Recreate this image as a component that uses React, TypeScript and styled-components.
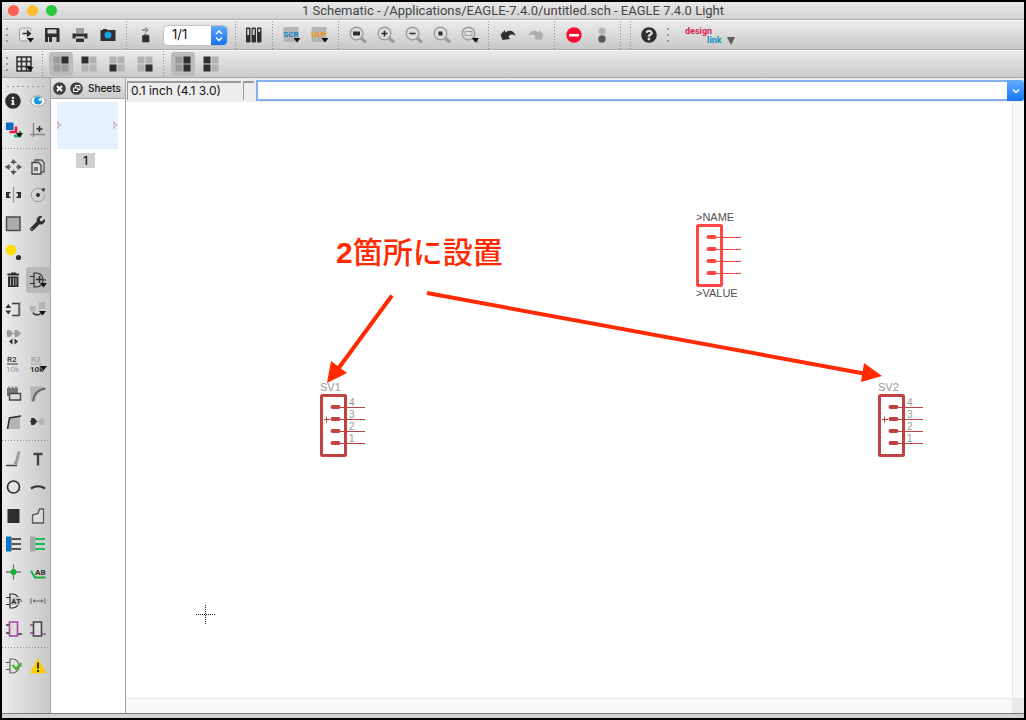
import React from 'react';
import styled, { createGlobalStyle, css } from 'styled-components';
import { FaWrench, FaQuestionCircle, FaInfoCircle } from 'react-icons/fa';

const INK = '#2f2f2f';
const MID = '#9c9c9c';
const SOFT = '#b4b4b4';

const GlobalStyle = createGlobalStyle`
  * { box-sizing: border-box; }
  body {
    margin: 0;
    background: #000;
    color: #111;
    font-family: Inter, "Noto Sans CJK JP", sans-serif;
  }
  button, input, select { font: inherit; color: inherit; margin: 0; }
`;

const Window = styled.div`
  display: flex;
  flex-direction: column;
  min-height: 100vh;
  border: 2px solid #000;
  background: #ececec;
`;

const TitleBar = styled.header`
  height: 18px;
  flex: none;
  display: grid;
  grid-template-columns: 64px 1fr 64px;
  align-items: center;
  border-bottom: 1px solid #aeaeae;
  background: linear-gradient(#e9e9e9, #d2d2d2);
`;

const Lights = styled.div`
  display: flex;
  gap: 8px;
  padding-left: 6px;
`;

const Light = styled.button<{ $color: string }>`
  width: 11px;
  height: 11px;
  padding: 0;
  border: 0;
  border-radius: 50%;
  background: ${(p) => p.$color};
`;

const Title = styled.h1`
  margin: 0;
  text-align: center;
  white-space: nowrap;
  font: 400 13px/16px Roboto, sans-serif;
  color: #444;
`;

const Toolbar = styled.div<{ $height: number }>`
  display: flex;
  align-items: center;
  flex: none;
  height: ${(p) => p.$height}px;
  border-top: 1px solid #fafafa;
  border-bottom: 1px solid #a9a9a9;
  background: linear-gradient(#ebebeb, #c9c9c9);
`;

const Grip = styled.div`
  width: 10px;
  height: 18px;
  flex: none;
  background: linear-gradient(#9a9a9a 0 2px, transparent 2px) 4px 2px / 2px 6px repeat-y;
`;

const Separator = styled.div<{ $width?: number }>`
  width: ${(p) => p.$width ?? 10}px;
  align-self: stretch;
  flex: none;
  padding-left: 4px;
  &::before {
    content: "";
    display: block;
    width: 1px;
    height: 100%;
    background: repeating-linear-gradient(#8c8c8c 0 1px, transparent 1px 3px);
  }
`;

const ToolButton = styled.button<{ $width?: number; $active?: boolean }>`
  display: flex;
  align-items: center;
  justify-content: center;
  flex: none;
  width: ${(p) => p.$width ?? 28}px;
  height: 26px;
  padding: 0;
  border: 0;
  border-radius: 3px;
  background: none;
  ${(p) =>
    p.$active &&
    css`
      background: #bcbcbc;
      background-clip: content-box;
      padding: 1px 2px;
      border-radius: 5px;
    `}
`;

const Icon = styled.svg`
  display: block;
  width: 24px;
  height: 24px;
  flex: none;
`;

const SheetPicker = styled.label`
  display: grid;
  width: 63px;
  height: 19px;
  margin: 0 4px;
  border-radius: 4px;
  overflow: hidden;
  background: #fff;
  box-shadow: 0 0 1px 1px #c0c0c0;
  & > * { grid-area: 1 / 1; }
`;

const SheetSelect = styled.select`
  appearance: none;
  width: 100%;
  border: 0;
  padding: 0 8px 2px;
  background: none;
  font-size: 13px;
  line-height: 17px;
`;

const Stepper = styled.svg`
  justify-self: end;
  width: 16px;
  height: 19px;
  background: linear-gradient(#62a8f8, #1771f2);
  pointer-events: none;
`;

const DesignLink = styled.button`
  padding: 0;
  margin-left: 12px;
  border: 0;
  background: none;
  & > svg { display: block; width: 54px; height: 26px; }
`;

const Main = styled.main`
  display: flex;
  flex: 1;
`;

const Palette = styled.nav`
  width: 49px;
  flex: none;
  border-right: 1px solid #a6a6a6;
  background: linear-gradient(90deg, #ececec, #c8c8c8);
`;

const PaletteGrip = styled.div`
  height: 9px;
  margin: 0 5px;
  background: linear-gradient(90deg, #9a9a9a 0 2px, transparent 2px) 0 8px / 5px 1px repeat-x;
`;

const PaletteGroup = styled.div<{ $rows: number; $height: number }>`
  display: grid;
  grid-template-columns: 24px 24px;
  grid-template-rows: repeat(${(p) => p.$rows}, 1fr);
  height: ${(p) => p.$height}px;
`;

const PaletteButton = styled.button<{ $active?: boolean }>`
  display: flex;
  align-items: center;
  justify-content: center;
  align-self: center;
  height: 26px;
  padding: 0;
  border: 0;
  border-radius: 4px;
  background: ${(p) => (p.$active ? '#b8b8b8' : 'none')};
`;

const PaletteRule = styled.hr`
  height: 1px;
  margin: 4px 0;
  border: 0;
  background: repeating-linear-gradient(90deg, #8f8f8f 0 1px, transparent 1px 3px);
`;

const SheetsPanel = styled.aside`
  width: 75px;
  flex: none;
  border-right: 1px solid #9f9f9f;
  background: #fff;
`;

const PanelHeader = styled.header`
  display: flex;
  align-items: center;
  gap: 4px;
  height: 21px;
  padding-left: 2px;
  border-bottom: 1px solid #a8a8a8;
  background: linear-gradient(#e6e6e6, #cbcbcb);
`;

const PanelButton = styled.button`
  padding: 0;
  border: 0;
  background: none;
  & > svg { display: block; width: 13px; height: 13px; }
`;

const PanelTitle = styled.h2`
  margin: 0 0 0 1px;
  font-size: 10px;
  line-height: 14px;
  font-weight: 500;
`;

const SheetItem = styled.button`
  display: flex;
  flex-direction: column;
  align-items: center;
  gap: 4px;
  width: 100%;
  padding: 3px 7px 0 6px;
  border: 0;
  background: none;
`;

const Thumb = styled.span`
  display: flex;
  align-items: center;
  justify-content: space-between;
  width: 100%;
  height: 47px;
  background: #e4f1fe;
  & > svg { width: 5px; height: 11px; }
`;

const SheetNumber = styled.span`
  width: 19px;
  margin-right: 4px;
  background: #d0d0d0;
  font-size: 12px;
  line-height: 15px;
  font-weight: 500;
`;

const Editor = styled.section`
  display: flex;
  flex-direction: column;
  flex: 1;
  min-width: 0;
`;

const CommandRow = styled.div`
  display: flex;
  align-items: center;
  height: 24px;
  gap: 2px;
  padding-left: 1px;
  background: #ececec;
`;

const Readout = styled.output<{ $width: number }>`
  width: ${(p) => p.$width}px;
  height: 19px;
  padding-left: 3px;
  flex: none;
  border: solid #9b9b9b;
  border-width: 2px 0 0 1px;
  background: #ededed;
  font-size: 12px;
  line-height: 16px;
  white-space: nowrap;
`;

const CommandBox = styled.div`
  display: flex;
  flex: 1;
  height: 21px;
`;

const CommandInput = styled.input`
  flex: 1;
  min-width: 0;
  border: 2px solid #84b0ec;
  border-right: 0;
  padding: 0 4px;
  background: #fff;
  font-size: 12px;
  outline: 0;
`;

const CommandDrop = styled.button`
  width: 17px;
  padding: 0;
  border: 0;
  border-radius: 0 3px 3px 0;
  background: linear-gradient(#66abfb, #1476f6);
  & > svg { display: block; width: 17px; height: 21px; }
`;

const Sheet = styled.div`
  display: grid;
  flex: 1;
  grid-template: 1fr 15px / 1fr 12px;
`;

const Drawing = styled.svg`
  width: 100%;
  height: 100%;
  background: #fff;
`;

const ScrollTrack = styled.div<{ $edge: 'left' | 'top' }>`
  background: #f8f8f8;
  border-${(p) => p.$edge}: 1px solid #e8e8e8;
`;

const ScrollCorner = styled.div`
  background: #e8e8e8;
`;

const StatusStrip = styled.footer`
  height: 5px;
  flex: none;
  border-top: 1px solid #7c7c7c;
  background: #d4d4d4;
`;

const Drop = ({ x = 15, y = 15 }: { x?: number; y?: number }) => (
  <path d={`M${x} ${y}h7l-3.5 4.5z`} fill="#111" />
);

const Lens = ({ children }: { children?: React.ReactNode }) => (
  <>
    <path d="M14.5 14.5l4.5 4" stroke={MID} strokeWidth="3.2" strokeLinecap="round" />
    <circle cx="10.500" cy="10.500" r="6.300" fill="#dedede" stroke={MID} strokeWidth="1.4" />
    {children}
  </>
);

const Quad = ({ dark, light = '#b2b2b2' }: { dark: number[]; light?: string }) => (
  <>
    {[0, 1, 2, 3].map((i) => (
      <rect
        key={i}
        x={4.5 + (i % 2) * 8}
        y={4.5 + (i > 1 ? 8 : 0)}
        width="7"
        height="7"
        fill={dark.includes(i) ? INK : light}
      />
    ))}
  </>
);

const Gate = ({ color = INK }: { color?: string }) => (
  <path
    d="M8 5h2.500c4 0 6.500 3.500 6.500 7s-2.500 7-6.500 7H8zM4 8.500h4M4 15.500h4M17 12h3"
    fill="none"
    stroke={color}
    strokeWidth="1.2"
  />
);

const Plug = ({ x, color, flip }: { x: number; color: string; flip?: boolean }) => (
  <path
    d="M0 0h1.500v-3h1.500c2 0 3 1.500 3 3s-1 3-3 3h-1.500v-3M6 0h1.500"
    transform={`translate(${x} 0)${flip ? ' scale(-1 1)' : ''}`}
    fill={color}
    stroke={color}
  />
);

type Tool = { label: string; art: React.ReactNode; width?: number; active?: boolean };

const fileTools: Tool[] = [
  {
    label: 'Open',
    width: 26,
    art: (
      <>
        <path d="M18 8V7q0-2-2-2H8.500q-2 0-2 2v9q0 2 2 2H14" fill="#e6e6e6" stroke={MID} />
        <path d="M9.500 10.500h6M14.500 8l3 2.500-3 2.500z" fill={INK} stroke={INK} strokeWidth="1.3" />
        <Drop x={14} y={15} />
      </>
    ),
  },
  {
    label: 'Save',
    art: (
      <>
        <path d="M5 5h13.500l1 1v13H5z" fill={INK} />
        <path d="M7.500 6.500h9v4h-9z" fill="#d8d8d8" />
        <path d="M8 14h8.500v5H8z" fill="#d0d0d0" />
        <path d="M9 14h3v5H9z" fill={INK} />
      </>
    ),
  },
  {
    label: 'Print',
    art: (
      <>
        <path d="M8 5h8v5H8z" fill={MID} />
        <path d="M4.500 10.500h15v5h-3v-2h-9v2h-3z" fill={INK} />
        <path d="M8 15.500h8v3.500H8z" fill={INK} />
      </>
    ),
  },
  {
    label: 'Export image',
    art: (
      <>
        <path d="M5 7h2V6h4v1h8.500v11h-15V7z" fill={INK} />
        <circle cx="12" cy="12" r="3.500" fill="#12a3e6" />
      </>
    ),
  },
];

const switchTool: Tool = {
  label: 'Switch to board',
  art: (
    <>
      <path d="M8 7h3V4.500l4 3.500-4 3.500V9H8z" fill={MID} transform="translate(0 -1)" />
      <path d="M8.500 12.500h6.500v6.500H8.500zM10 11.500h3.500" fill={INK} stroke={INK} strokeWidth=".6" />
    </>
  ),
};

const libraryTool: Tool = {
  label: 'Use library',
  art: [4, 9.5, 15].map((x, i) => (
    <g key={x}>
      <rect x={x} y="4.500" width="4.500" height="15" rx="1" fill={INK} />
      <rect x={x + 1.2} y="6" width="2" height={i === 2 ? 3 : 6} fill="#d2d2d2" />
    </g>
  )),
};

const Tag = ({ text, color }: { text: string; color: string }) => (
  <>
    <rect x="3.500" y="4" width="15" height="15" fill={SOFT} />
    <text x="11" y="14" textAnchor="middle" fontFamily="Roboto, sans-serif" fontWeight="700" fontSize="8" fill={color}>
      {text}
    </text>
    <Drop x={13.5} y={15} />
  </>
);

const scriptTools: Tool[] = [
  { label: 'Run script', art: <Tag text="SCR" color="#0b86c8" /> },
  { label: 'Run ULP', art: <Tag text="ULP" color="#ff9200" /> },
];

const zoomTools: Tool[] = [
  { label: 'Zoom to fit', art: <Lens><path d="M7 8.500h7v4H7z" fill={INK} /></Lens> },
  { label: 'Zoom in', art: <Lens><path d="M7.500 10.500h6M10.500 7.500v6" stroke={INK} strokeWidth="1.6" /></Lens> },
  { label: 'Zoom out', art: <Lens><path d="M7.500 10.500h6" stroke={INK} strokeWidth="1.6" /></Lens> },
  { label: 'Redraw', art: <Lens><path d="M8.500 8.500h4v4h-4z" fill={INK} /></Lens> },
  {
    label: 'Zoom select',
    art: (
      <>
        <Lens><path d="M7 8.500h7v4H7z" fill="none" stroke={MID} /></Lens>
        <Drop x={14} y={15} />
      </>
    ),
  },
];

const undoPath = 'M4.500 11.500l4.500-4.500v2.500c5-3.500 9.500-1.500 10.500 3.500-2.500-2-5-2-7 .500l1.500 2.500-7.500 1z';
const historyTools: Tool[] = [
  { label: 'Undo', art: <path d={undoPath} fill={INK} /> },
  { label: 'Redo', art: <path d={undoPath} fill="#adadad" transform="matrix(-1 0 0 1 24 0)" /> },
];

const runTools: Tool[] = [
  {
    label: 'Stop',
    art: (
      <>
        <circle cx="12" cy="12" r="7.700" fill="#fb0d33" />
        <path d="M7 11h10v2.500H7z" fill="#fff" />
      </>
    ),
  },
  {
    label: 'Go',
    art: (
      <>
        <circle cx="12" cy="8" r="3.500" fill={SOFT} />
        <circle cx="12" cy="16" r="3.700" fill="#585858" />
      </>
    ),
  },
];

const placementTools: Tool[] = [
  { label: 'Top right', active: true, art: <Quad dark={[1]} light="#9c9c9c" /> },
  { label: 'Top left', art: <Quad dark={[0]} /> },
  { label: 'Bottom left', art: <Quad dark={[2]} /> },
  { label: 'Bottom right', art: <Quad dark={[3]} /> },
];

const sideTools: Tool[] = [
  { label: 'Right column', active: true, art: <Quad dark={[1, 3]} light="#9c9c9c" /> },
  { label: 'Left column', art: <Quad dark={[0, 2]} /> },
];

const gridTool: Tool = {
  label: 'Grid',
  width: 26,
  art: (
    <>
      <path
        d="M4 5h14v14H4zM8.500 5v14M13.500 5v14M4 9.500h14M4 14.500h14"
        fill="#dcdcdc"
        stroke={INK}
        strokeWidth="1.500"
      />
      <Drop x={13.5} y={15} />
    </>
  ),
};

const Value = ({ top, bottom, drop }: { top: string; bottom: string; drop?: boolean }) => (
  <g fontFamily="Roboto, sans-serif" fontSize="8">
    <text x="5" y="9" fill={top} fontWeight="500">R2</text>
    <path d="M5 11h11" stroke={top} />
    <text x="4" y="19" fill={bottom} fontWeight={drop ? 700 : 400}>10k</text>
    {drop && <Drop x={14} y={13} />}
  </g>
);

const Bus = ({ block, wire }: { block: string; wire: string }) => (
  <>
    <path d="M4 4.500h5.500v15H4z" fill={block} />
    <path d="M9.500 7h9.500M9.500 12h9.500M9.500 17h9.500" stroke={wire} strokeWidth="2" />
  </>
);

const Module = ({ body, pins }: { body: string; pins: string }) => (
  <>
    <path d="M4 8h4M4 16h4M16 17h4" stroke={pins} strokeWidth="1.600" />
    <path d="M7.500 5h8v14h-8z" fill="#dedede" stroke={body} strokeWidth="1.600" />
  </>
);

const viewTools: Tool[] = [
  { label: 'Info', art: <FaInfoCircle x="3" y="4" size={16} color={INK} /> },
  {
    label: 'Show',
    art: (
      <>
        <ellipse cx="12" cy="12" rx="7.200" ry="5.200" fill="#fff" stroke={MID} />
        <circle cx="12" cy="11.500" r="4" fill="#0f9be2" />
        <circle cx="14" cy="10.500" r="1.500" fill="#fff" />
      </>
    ),
  },
  {
    label: 'Display layers',
    art: (
      <>
        <path d="M4 4.500h7.500V12H4z" fill="#0a6cc0" />
        <path d="M7.500 14h6.500V8.500" fill="none" stroke="#ef1745" strokeWidth="2.600" />
        <path d="M12 18h6v-5" fill="none" stroke="#10a860" strokeWidth="2.400" />
        <Drop x={14} y={15} />
      </>
    ),
  },
  {
    label: 'Mark',
    art: (
      <>
        <path d="M7.500 5v14M4 16.500h15" stroke="#858585" strokeWidth="1.300" />
        <path d="M10.500 11h6M13.500 8v6" stroke={INK} strokeWidth="1.600" />
      </>
    ),
  },
];

const editTools: Tool[] = [
  {
    label: 'Move',
    art: (
      <path
        d="M11.500 5l2 2.500h-4zM11.500 19l2-2.500h-4zM4 12l3-2v4zM19 12l-3-2v4zM7 12h2M14 12h2M11.500 7v2.500M11.500 14.500V17"
        fill="#555"
        stroke="#555"
        strokeWidth="1.200"
      />
    ),
  },
  {
    label: 'Copy',
    art: (
      <>
        <path d="M9 7V5h6.500l2.500 2.500V17h-3" fill="none" stroke="#555" strokeWidth="1.300" />
        <path d="M6 7.500h6.500L15 10v9H6z" fill="#ddd" stroke="#444" strokeWidth="1.300" />
        <path d="M8 12h4v4H8z" fill="#777" />
      </>
    ),
  },
  {
    label: 'Mirror',
    art: (
      <>
        <path d="M11.500 4v16" stroke={MID} strokeWidth="1.300" />
        <path d="M4 9h4.500v1.500H7v3h1.500V15H4zM19 9h-4.500v1.500H16v3h-1.500V15H19z" fill={INK} />
      </>
    ),
  },
  {
    label: 'Rotate',
    art: (
      <>
        <circle cx="12" cy="12" r="6.800" fill="none" stroke={MID} strokeDasharray="36 7" />
        <circle cx="12" cy="12" r="2" fill={INK} />
        <path d="M15 6l4-1-1 4z" fill={INK} />
      </>
    ),
  },
  { label: 'Group', art: <path d="M4.500 5h13.500v13.500H4.500z" fill="#ababab" stroke="#4b4b4b" strokeWidth="1.500" /> },
  { label: 'Change', art: <FaWrench x="4" y="4" size={15} color={INK} /> },
  {
    label: 'Paste',
    art: (
      <>
        <circle cx="9" cy="10" r="5.300" fill="#ffdd00" />
        <circle cx="16.500" cy="17.500" r="2.600" fill={INK} />
      </>
    ),
  },
  { label: '', art: null },
  {
    label: 'Delete',
    art: (
      <>
        <path d="M5.500 6.500h11.500M9 5.500h5" stroke={INK} strokeWidth="2" />
        <path d="M6 8.500h10.500V19H6z" fill={INK} />
        <path d="M8.500 10v7.500M11.500 10v7.500M14 10v7.500" stroke="#aaa" />
      </>
    ),
  },
  {
    label: 'Add part',
    active: true,
    art: (
      <>
        <Gate />
        <path d="M10 11.500h7M13.500 8v7" stroke={INK} strokeWidth="1.600" />
        <Drop x={14} y={15} />
      </>
    ),
  },
  {
    label: 'Pin swap',
    art: (
      <>
        <path d="M3.500 11l2.800-4 2.800 4zM3.500 13.500h5.600l-2.800 4z" fill={INK} />
        <path d="M17 5h2v14h-2z" fill={SOFT} />
        <path d="M10 6.500h7v12h-7" fill="none" stroke="#444" strokeWidth="1.300" />
      </>
    ),
  },
  {
    label: 'Replace',
    art: (
      <>
        <path d="M4 9h5.500v5.500H4zM13 5h6v7h-6z" fill={SOFT} />
        <path d="M7 15.500q1 3 6 2l2-1" fill="none" stroke={INK} strokeWidth="1.300" />
        <Drop x={13} y={14} />
      </>
    ),
  },
  {
    label: 'Gate swap',
    art: (
      <>
        <g transform="translate(0 8.500)">
          <Plug x={4} color={MID} />
          <Plug x={11.5} color={MID} />
        </g>
        <path d="M10.500 13.500v6L7 16.500zM12.500 13.500v6l3.500-3z" fill={INK} />
      </>
    ),
  },
  { label: '', art: null },
  { label: 'Name', art: <Value top={INK} bottom={MID} /> },
  { label: 'Value', art: <Value top={MID} bottom={INK} drop /> },
  {
    label: 'Smash',
    art: (
      <>
        <path d="M5 6h11v8H5z" fill="#777" />
        <path d="M7 4.500v3M10.500 4.500v3M14 4.500v3" stroke="#777" strokeWidth="1.600" />
        <path d="M7.500 11.500h11v6.500h-11z" fill="#ddd" stroke="#444" strokeWidth="1.400" />
      </>
    ),
  },
  {
    label: 'Miter',
    art: (
      <>
        <path d="M4.500 4.500h14v4q-8 1-9 10.500h-5z" fill={SOFT} />
        <path d="M7 19.500q1-11.500 12.500-13" fill="none" stroke="#555" strokeWidth="1.500" />
      </>
    ),
  },
  {
    label: 'Split',
    art: (
      <>
        <path d="M8 8l10-1.500V19H6z" fill={SOFT} />
        <path d="M5.500 19l2-11L19 6" fill="none" stroke={INK} strokeWidth="1.500" />
      </>
    ),
  },
  {
    label: 'Invoke',
    art: (
      <g transform="translate(0 11.500)">
        <Plug x={4} color={INK} />
        <Plug x={19} color={SOFT} flip />
      </g>
    ),
  },
];

const drawTools: Tool[] = [
  {
    label: 'Wire',
    art: (
      <>
        <path d="M4 18.500h11" stroke="#444" strokeWidth="1.500" />
        <path d="M17 4.500l-2.500 10-1.500 3" stroke={MID} strokeWidth="3" fill="none" />
      </>
    ),
  },
  { label: 'Text', art: <path d="M7.500 7h9M12 7v11.500" stroke="#444" strokeWidth="2.400" fill="none" /> },
  { label: 'Circle', art: <circle cx="11.500" cy="12" r="6" fill="none" stroke={INK} strokeWidth="1.700" /> },
  { label: 'Arc', art: <path d="M5 13.500q7-4.500 14 0" fill="none" stroke={INK} strokeWidth="2.200" /> },
  { label: 'Rectangle', art: <path d="M5.500 5h12v14h-12z" fill={INK} /> },
  { label: 'Polygon', art: <path d="M6.500 19v-8L12 9.500l1.500-4.500h4v14z" fill="#ddd" stroke="#555" strokeWidth="1.300" /> },
  { label: 'Bus', art: <Bus block="#0b74c6" wire="#555" /> },
  { label: 'Net', art: <Bus block="#a6a6a6" wire="#15bd55" /> },
  {
    label: 'Junction',
    art: (
      <>
        <path d="M11.500 4.500v15M4 12h15" stroke="#777" strokeWidth="1.300" />
        <circle cx="11.500" cy="12" r="3" fill="#10b030" />
      </>
    ),
  },
  {
    label: 'Label',
    art: (
      <>
        <path d="M5 11l4 6.500h10.500" fill="none" stroke="#15ae45" strokeWidth="2" />
        <text x="9" y="15" fontFamily="Roboto, sans-serif" fontWeight="700" fontSize="8" fill={INK}>AB</text>
      </>
    ),
  },
  {
    label: 'Attribute',
    art: (
      <>
        <Gate />
        <rect x="9.500" y="8" width="9" height="8" fill="#c8c8c8" />
        <text x="9" y="15" fontFamily="Roboto, sans-serif" fontWeight="700" fontSize="8" fill={INK}>AT</text>
      </>
    ),
  },
  {
    label: 'Dimension',
    art: <path d="M5 9v6M19 9v6M7 12h10M9 10.500L7 12l2 1.500M15 10.500l2 1.500-2 1.500" fill="none" stroke="#666" />,
  },
  { label: 'Module', art: <Module body="#a044a0" pins={INK} /> },
  { label: 'Port', art: <Module body="#444" pins="#a044a0" /> },
];

const checkTools: Tool[] = [
  {
    label: 'Electrical rule check',
    art: (
      <>
        <Gate color="#666" />
        <path d="M10.500 11l3.500 4 5.500-6" fill="none" stroke="#3fb71c" strokeWidth="2" />
      </>
    ),
  },
  {
    label: 'Errors',
    art: (
      <>
        <path d="M12 5.500L19 18.500H5z" fill="#fc0" stroke="#fc0" strokeWidth="1.500" strokeLinejoin="round" />
        <path d="M12 8.500v6M12 16v2" stroke={INK} strokeWidth="2" />
      </>
    ),
  },
];

const Tools = ({ items }: { items: Tool[] }) => (
  <>
    {items.map((t) => (
      <ToolButton key={t.label} type="button" aria-label={t.label} $width={t.width} $active={t.active}>
        <Icon viewBox="0 0 24 24" fill="none">{t.art}</Icon>
      </ToolButton>
    ))}
  </>
);

const PaletteTools = ({ items, height }: { items: Tool[]; height: number }) => (
  <PaletteGroup $rows={items.length / 2} $height={height}>
    {items.map((t, i) =>
      t.art ? (
        <PaletteButton key={i} type="button" aria-label={t.label} $active={t.active}>
          <Icon viewBox="0 0 24 24" fill="none">{t.art}</Icon>
        </PaletteButton>
      ) : (
        <span key={i} />
      ),
    )}
  </PaletteGroup>
);

const vectorFont = '"Liberation Sans", Arial, sans-serif';

type PartProps = { x: number; y: number; name: string; value?: string; color: string; ink: string; placed?: boolean };

const Part = ({ x, y, name, value, color, ink, placed }: PartProps) => (
  <g transform={`translate(${x} ${y})`} fontFamily={vectorFont} fontSize="11">
    <g fill={ink}>
      <text x="0" y="-3">{name}</text>
      {value && <text x="0" y="73">{value}</text>}
      {placed &&
        [4, 3, 2, 1].map((pin, i) => (
          <text key={pin} x="29" y={12 + i * 12} fontSize="10">{pin}</text>
        ))}
    </g>
    <g fill="none" stroke={color}>
      <rect x="1.500" y="1.500" width="24" height="60" rx="1" strokeWidth="3" />
      {[13, 25, 37, 49].map((row) => (
        <g key={row} transform={`translate(0 ${row})`}>
          <path d="M20 .5h25" />
          <path d="M12.500 0h6" strokeWidth="4" strokeLinecap="round" />
        </g>
      ))}
      {placed && <path d="M4 25.500h6M6.500 22.500v6" />}
    </g>
  </g>
);

const MiniPart = () => (
  <svg viewBox="0 0 5 11">
    <path d="M1 1v8M1 3l3 2-3 2" fill="none" stroke="#d3a3b8" />
  </svg>
);

export default function App() {
  return (
    <>
      <GlobalStyle />
      <Window>
        <TitleBar>
          <Lights>
            <Light type="button" aria-label="Close" $color="#ff5f57" />
            <Light type="button" aria-label="Minimize" $color="#ffbd2e" />
            <Light type="button" aria-label="Zoom" $color="#28c840" />
          </Lights>
          <Title>1 Schematic - /Applications/EAGLE-7.4.0/untitled.sch - EAGLE 7.4.0 Light</Title>
        </TitleBar>

        <Toolbar $height={30}>
          <Grip />
          <Tools items={fileTools} />
          <Separator />
          <Tools items={[switchTool]} />
          <SheetPicker>
            <SheetSelect aria-label="Sheet" defaultValue="1/1">
              <option>1/1</option>
            </SheetSelect>
            <Stepper viewBox="0 0 16 19">
              <path d="M5 8l3-3 3 3M5 11.500l3 3 3-3" fill="none" stroke="#fff" strokeWidth="1.400" />
            </Stepper>
          </SheetPicker>
          <Separator $width={9} />
          <Tools items={[libraryTool]} />
          <Separator />
          <Tools items={scriptTools} />
          <Separator />
          <Tools items={zoomTools} />
          <Separator />
          <Tools items={historyTools} />
          <Separator />
          <Tools items={runTools} />
          <Separator />
          <Separator $width={9} />
          <Tools items={[{ label: 'Help', art: <FaQuestionCircle x="4" y="4" size={16} color={INK} /> }]} />
          <Grip />
          <DesignLink type="button" aria-label="Design link">
            <svg viewBox="0 0 54 26" fontFamily="Roboto, sans-serif" fontWeight="700" fontSize="9">
              <text x="0" y="12" fill="#d9274f">design</text>
              <text x="22" y="21" fill="#1591bd">link</text>
              <path d="M42 15h8l-4 8z" fill="#5c5c5c" />
            </svg>
          </DesignLink>
        </Toolbar>

        <Toolbar $height={28}>
          <Grip />
          <Tools items={[gridTool]} />
          <Separator $width={9} />
          <Tools items={placementTools} />
          <Separator />
          <Tools items={sideTools} />
        </Toolbar>

        <Main>
          <Palette aria-label="Tools">
            <PaletteGrip />
            <PaletteTools items={viewTools} height={57} />
            <PaletteRule />
            <PaletteTools items={editTools} height={283} />
            <PaletteRule />
            <PaletteTools items={drawTools} height={198} />
            <PaletteRule />
            <PaletteTools items={checkTools} height={28} />
          </Palette>

          <SheetsPanel>
            <PanelHeader>
              <PanelButton type="button" aria-label="Close panel">
                <svg viewBox="0 0 13 13">
                  <circle cx="6.500" cy="6.500" r="6.300" fill="#3f3f3f" />
                  <path d="M4 4l5 5M9 4L4 9" stroke="#fff" strokeWidth="2" />
                </svg>
              </PanelButton>
              <PanelButton type="button" aria-label="Float panel">
                <svg viewBox="0 0 13 13" fill="none">
                  <circle cx="6.500" cy="6.500" r="6.300" fill="#3f3f3f" />
                  <path d="M3.500 6h4.500v3.500H3.500zM5.500 6V3.500H10v4H8" stroke="#fff" />
                </svg>
              </PanelButton>
              <PanelTitle>Sheets</PanelTitle>
            </PanelHeader>
            <SheetItem type="button">
              <Thumb>
                <MiniPart />
                <MiniPart />
              </Thumb>
              <SheetNumber>1</SheetNumber>
            </SheetItem>
          </SheetsPanel>

          <Editor>
            <CommandRow>
              <Readout $width={114}>0.1 inch (4.1 3.0)</Readout>
              <Readout $width={11} aria-label="Message" />
              <CommandBox>
                <CommandInput type="text" aria-label="Command" />
                <CommandDrop type="button" aria-label="Command history">
                  <svg viewBox="0 0 17 21">
                    <path d="M6 9.500l3 3 3-3" fill="none" stroke="#fff" strokeWidth="1.500" />
                  </svg>
                </CommandDrop>
              </CommandBox>
            </CommandRow>
            <Sheet>
              <Drawing>
                <Part x={570} y={122} name=">NAME" value=">VALUE" color="#ff4646" ink="#505050" />
                <Part x={194} y={292} name="SV1" color="#bf4242" ink="#989898" placed />
                <Part x={752} y={292} name="SV2" color="#bf4242" ink="#989898" placed />
                <path d="M70 512.500h19M79.500 503v19" stroke="#222" strokeDasharray="1 1" fill="none" />
                <g stroke="#ff2a00" strokeWidth="4" fill="#ff2a00">
                  <path d="M266 193.500L212 267M301 191L738 271.500" />
                  <path d="M201 281l4-22 16 12zM756 274l-18-13-3 19z" stroke="none" />
                </g>
                <text
                  x="210"
                  y="161"
                  fill="#ff2a00"
                  fontSize="30"
                  fontWeight="700"
                  fontFamily='"Liberation Sans", Arial, sans-serif'
                >
                  2
                  <tspan fontWeight="500" fontFamily='"Noto Sans CJK JP", sans-serif'>箇所に設置</tspan>
                </text>
              </Drawing>
              <ScrollTrack $edge="left" />
              <ScrollTrack $edge="top" />
              <ScrollCorner />
            </Sheet>
          </Editor>
        </Main>
        <StatusStrip />
      </Window>
    </>
  );
}
